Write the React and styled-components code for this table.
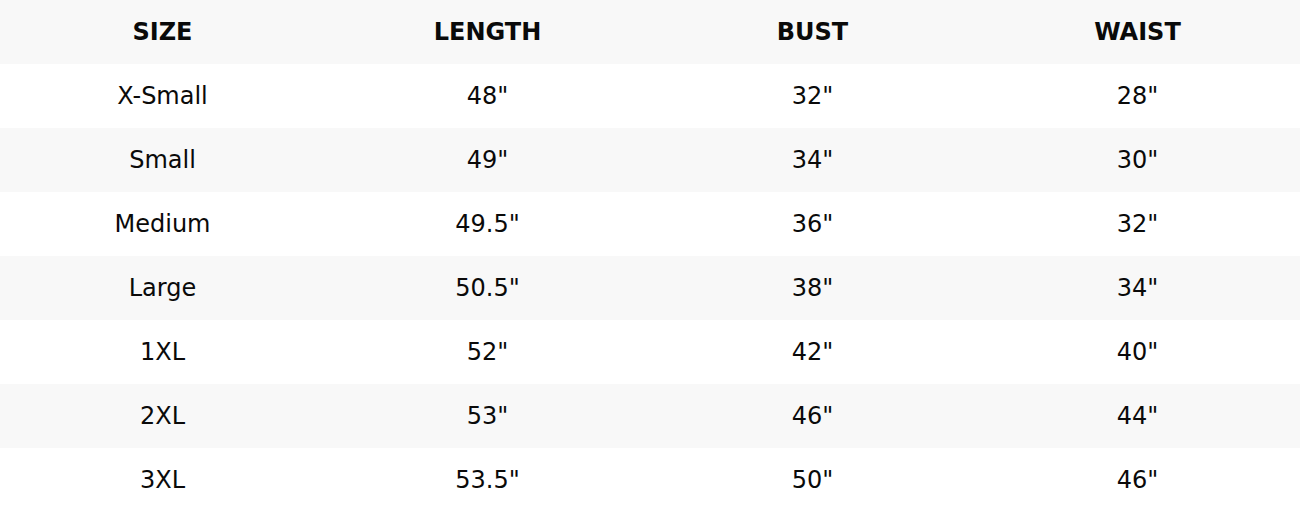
import React from 'react';
import styled, { createGlobalStyle } from 'styled-components';

const GlobalStyle = createGlobalStyle`
  body {
    margin: 0;
    background: #ffffff;
    font-family: "DejaVu Sans", sans-serif;
  }
`;

const Table = styled.table`
  width: 1300px;
  border-collapse: collapse;
  table-layout: fixed;
  color: #0a0a0a;
  font-size: 24px;
`;

const Row = styled.tr`
  height: 64px;
  background: ${props => (props.shaded ? '#f8f8f8' : '#ffffff')};
`;

const Head = styled.th`
  font-weight: bold;
  text-align: center;
  padding: 0;
`;

const Cell = styled.td`
  text-align: center;
  padding: 0;
`;

const rows = [
  ['X-Small', '48"', '32"', '28"'],
  ['Small', '49"', '34"', '30"'],
  ['Medium', '49.5"', '36"', '32"'],
  ['Large', '50.5"', '38"', '34"'],
  ['1XL', '52"', '42"', '40"'],
  ['2XL', '53"', '46"', '44"'],
  ['3XL', '53.5"', '50"', '46"'],
];

export default function App() {
  return (
    <>
      <GlobalStyle />
      <Table>
        <thead>
          <Row shaded>
            <Head>SIZE</Head>
            <Head>LENGTH</Head>
            <Head>BUST</Head>
            <Head>WAIST</Head>
          </Row>
        </thead>
        <tbody>
          {rows.map((r, i) => (
            <Row key={r[0]} shaded={i % 2 === 1}>
              {r.map((v, j) => (
                <Cell key={j}>{v}</Cell>
              ))}
            </Row>
          ))}
        </tbody>
      </Table>
    </>
  );
}
